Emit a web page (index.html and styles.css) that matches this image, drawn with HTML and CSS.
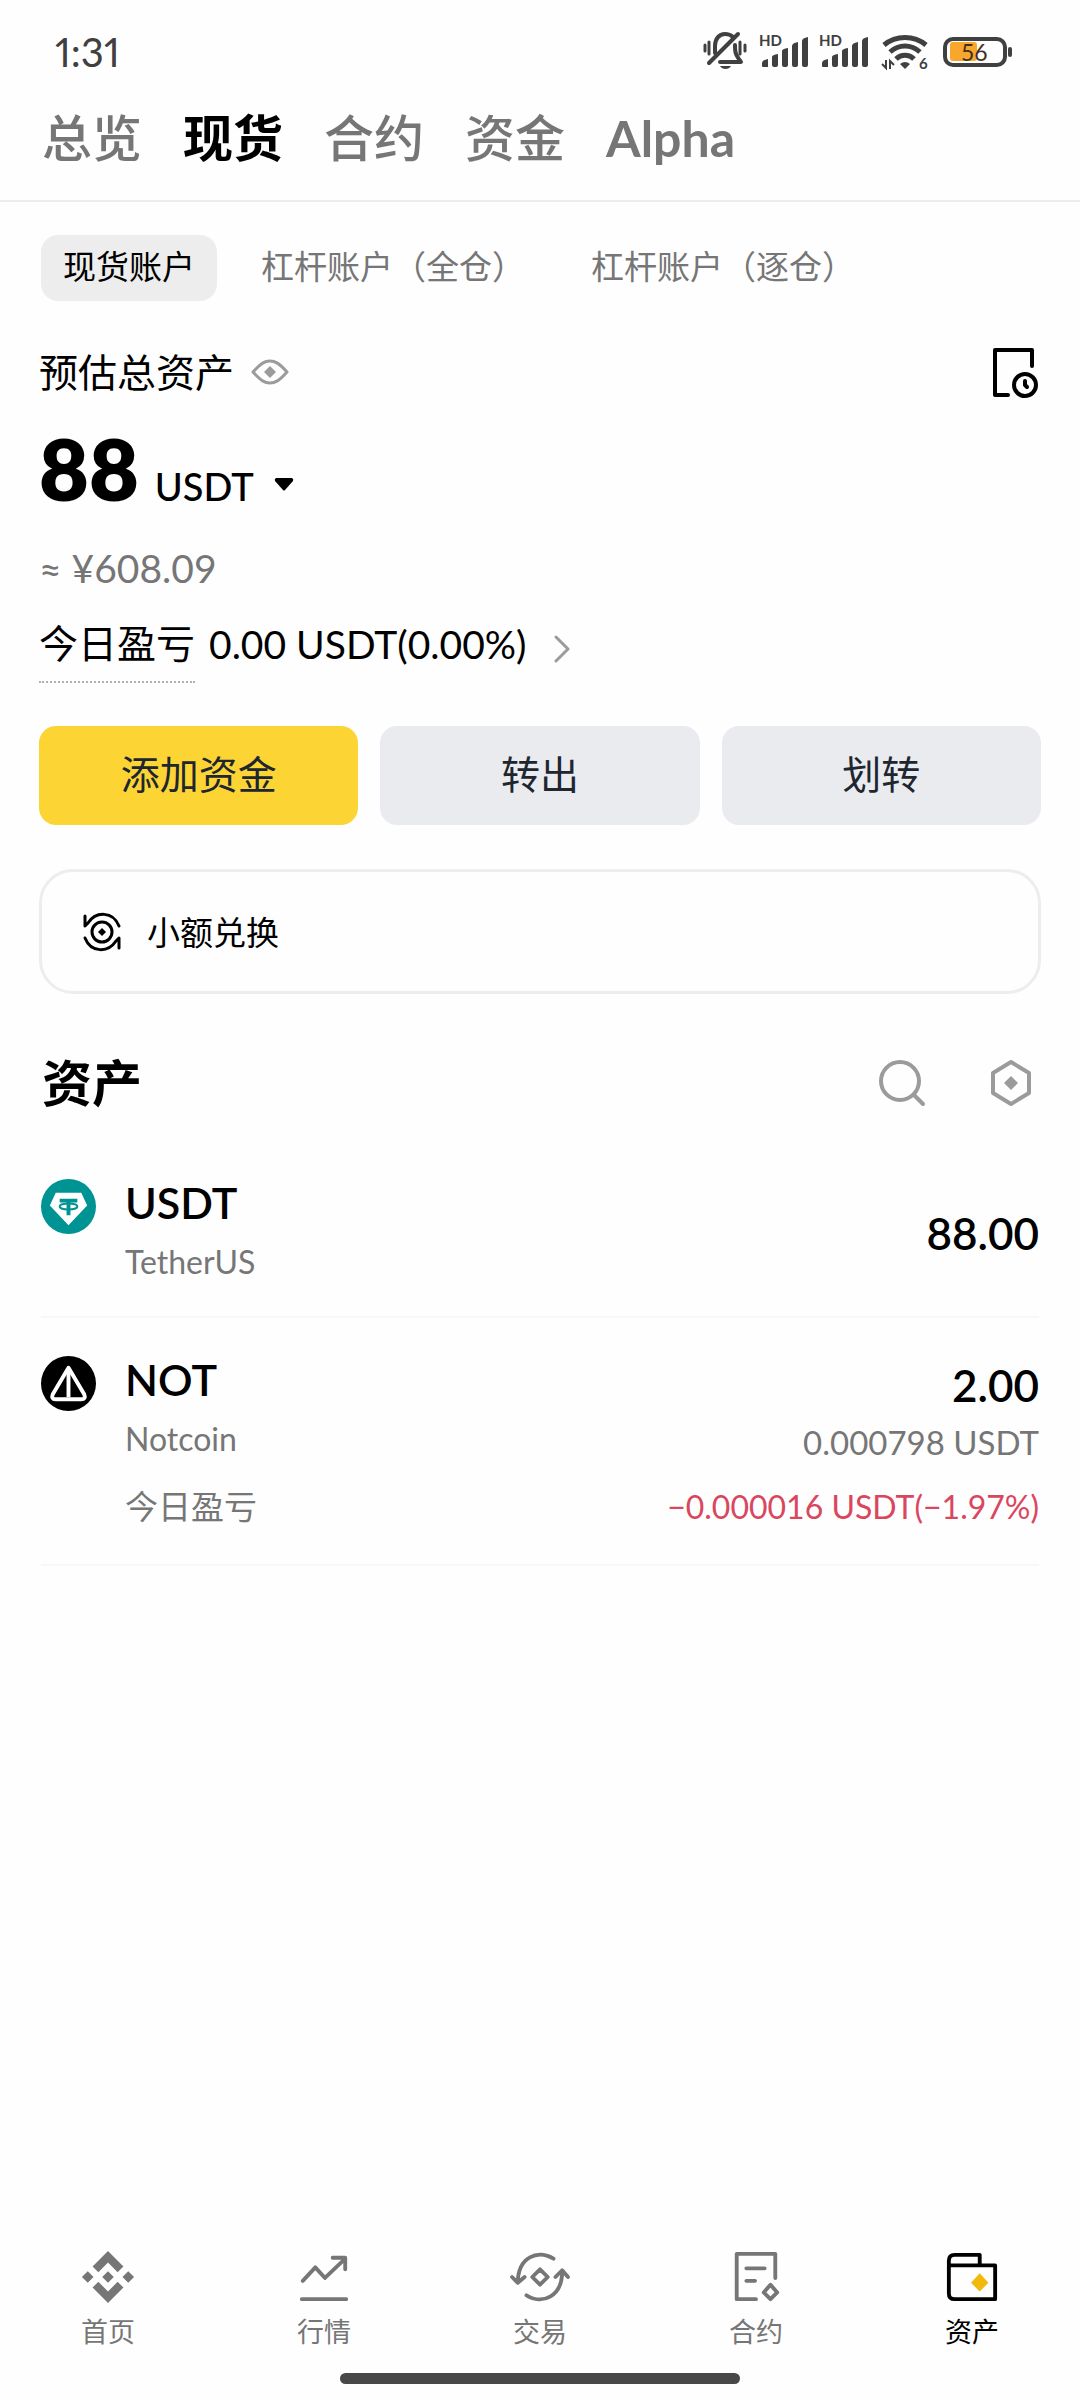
FILE: index.html
```html
<!DOCTYPE html>
<html lang="zh-CN">
<head>
<meta charset="utf-8">
<meta name="viewport" content="width=device-width, initial-scale=1">
<title>资产</title>
<link rel="stylesheet" href="styles.css">
</head>
<body>
<div class="app">
  <div class="status">
    <time class="status-time">1:31</time>
    <div class="status-icons">
      <svg width="48" height="42" viewBox="0 0 48 42" fill="none" stroke="currentColor" stroke-width="4" stroke-linecap="round" stroke-linejoin="round">
        <path d="M2 14v6M6 11v12M37 11v12M42 14v6" stroke-width="3"/>
        <path d="M12 22v-7c0-7 4-12 10-12 3 0 6 1 8 3M32 14c0 7 0 9 6 17H17"/>
        <path d="M35 3 6 32"/>
        <path d="M17 35h11c-2 4-9 4-11 0z" fill="currentColor" stroke="none"/>
      </svg>
      <svg width="52" height="44" viewBox="0 -4 52 44" fill="currentColor">
        <text x="0" y="12" class="glyph-hd">HD</text>
        <path d="M3 29q0-3 6-4v8H4q-1 0-1-1zM13 23q0-2 6-3v11q0 2-2 2h-2q-2 0-2-2zM23 17q0-2 6-3v17q0 2-2 2h-2q-2 0-2-2zM33 12q0-3 6-4v23q0 2-2 2h-2q-2 0-2-2zM43 7q0-3 6-4v28q0 2-2 2h-2q-2 0-2-2z"/>
      </svg>
      <svg width="54" height="44" viewBox="0 -4 54 44" fill="currentColor">
        <text x="0" y="12" class="glyph-hd">HD</text>
        <path d="M3 29q0-3 6-4v8H4q-1 0-1-1zM13 23q0-2 6-3v11q0 2-2 2h-2q-2 0-2-2zM23 17q0-2 6-3v17q0 2-2 2h-2q-2 0-2-2zM33 12q0-3 6-4v23q0 2-2 2h-2q-2 0-2-2zM43 7q0-3 6-4v28q0 2-2 2h-2q-2 0-2-2z"/>
      </svg>
      <svg width="54" height="44" viewBox="0 -4 54 44" fill="none" stroke="currentColor">
        <path d="M3 11C15 1 33 1 45 11M9 18c9-8 21-8 30 0M15 25c5-5 13-5 18 0" stroke-width="5"/>
        <path d="M19 30q5-4 10 0l-5 5z" fill="currentColor" stroke="none"/>
        <path d="M5 26v8l-4-4M9 35v-8l4 4" stroke-width="2"/>
        <text x="38" y="35" class="glyph-six">6</text>
      </svg>
      <svg width="70" height="32" viewBox="0 0 70 32">
        <rect x="7" y="6" width="27" height="19" rx="3" fill="#f9a72c"/>
        <rect x="2" y="3" width="60" height="26" rx="8" fill="none" stroke="currentColor" stroke-width="4"/>
        <rect x="65" y="11" width="4" height="10" rx="2" fill="currentColor"/>
        <text x="18" y="25" class="glyph-charge">56</text>
      </svg>
    </div>
  </div>

  <nav class="tabs">
    <a href="#overview">总览</a>
    <a href="#spot" class="is-active" aria-current="page">现货</a>
    <a href="#futures">合约</a>
    <a href="#funding">资金</a>
    <a href="#alpha" class="tab-latin">Alpha</a>
  </nav>

  <main class="content">
    <div class="accounts">
      <button type="button" class="pill is-selected">现货账户</button>
      <button type="button" class="pill">杠杆账户（全仓）</button>
      <button type="button" class="pill">杠杆账户（逐仓）</button>
    </div>

    <section class="summary">
      <div class="summary-head">
        <h2 class="summary-title">预估总资产</h2>
        <button type="button" class="icon-button" aria-label="隐藏余额">
          <svg width="38" height="28" viewBox="0 0 38 28" fill="none" stroke="#9b9b9b" stroke-width="3" stroke-linejoin="round">
            <path d="M2 14C10 5 14 3 19 3s9 2 17 11c-8 9-12 11-17 11S10 23 2 14z"/>
            <path d="M19 8l6 6-6 6-6-6z" fill="#9b9b9b" stroke="none"/>
          </svg>
        </button>
        <button type="button" class="icon-button history" aria-label="历史记录">
          <svg width="48" height="52" viewBox="0 0 48 52" fill="none" stroke="#000" stroke-width="4" stroke-linecap="round" stroke-linejoin="round">
            <path d="M39 18V2H2v45h13"/>
            <circle cx="32" cy="37" r="11"/>
            <path d="M32 33v4l2 2"/>
          </svg>
        </button>
      </div>
      <div class="balance">
        <strong class="balance-value">88</strong>
        <select class="currency" aria-label="计价单位"><option>USDT</option></select>
        <svg class="caret" width="20" height="14" viewBox="0 0 20 14"><path d="M2 0h16q2 1 1 3l-8 9q-1 1-2 0L1 3Q0 1 2 0z"/></svg>
      </div>
      <p class="fiat">≈ ¥608.09</p>
      <a href="#pnl" class="pnl">
        <span class="pnl-label">今日盈亏</span>
        <span class="pnl-value">0.00 USDT(0.00%)</span>
        <svg width="16" height="28" viewBox="0 0 16 28" fill="none" stroke="#9b9b9b" stroke-width="3" stroke-linecap="round" stroke-linejoin="round"><path d="M2 2l12 12L2 26"/></svg>
      </a>
    </section>

    <div class="actions">
      <button type="button" class="action is-primary">添加资金</button>
      <button type="button" class="action">转出</button>
      <button type="button" class="action">划转</button>
    </div>

    <a href="#convert" class="convert">
      <svg width="38" height="40" viewBox="0 0 38 40" fill="none" stroke="#000" stroke-width="3" stroke-linecap="round" stroke-linejoin="round">
        <path d="M2 4v10l3-3C13-1 30-1 36 14M36 36V26l-3 3C25 41 8 41 2 26"/>
        <circle cx="19" cy="20" r="10"/>
        <path d="M19 16l4 4-4 4-4-4z" fill="#000" stroke="none"/>
      </svg>
      小额兑换
    </a>

    <section>
      <div class="assets-head">
        <h2 class="assets-title">资产</h2>
        <button type="button" class="icon-button" aria-label="搜索">
          <svg width="48" height="48" viewBox="0 0 48 48" fill="none" stroke="#9b9b9b" stroke-width="4" stroke-linecap="round"><circle cx="21" cy="22" r="19"/><path d="M35 36l9 9"/></svg>
        </button>
        <button type="button" class="icon-button" aria-label="设置">
          <svg width="40" height="48" viewBox="0 0 40 48" fill="none" stroke="#9b9b9b" stroke-width="4" stroke-linejoin="round"><path d="M20 3l18 11v20L20 45 2 34V14z"/><path d="M20 17l7 7-7 7-7-7z" fill="#9b9b9b" stroke="none"/></svg>
        </button>
      </div>
      <ul class="assets">
        <li class="asset">
          <svg class="coin" width="55" height="55" viewBox="0 0 56 56">
            <circle cx="28" cy="28" r="28" fill="#009393"/>
            <path d="M15 14h26l6 13-19 20L9 27z" fill="#fff"/>
            <path d="M19 20h18v4h-7v13h-4V24h-7z" fill="#009393"/>
            <ellipse cx="28" cy="28" rx="9" ry="3" fill="none" stroke="#009393" stroke-width="2"/>
          </svg>
          <div class="asset-info">
            <h3 class="asset-symbol">USDT</h3>
            <p class="asset-sub">TetherUS</p>
          </div>
          <div class="asset-figures is-single"><p class="asset-amount">88.00</p></div>
        </li>
        <li class="asset">
          <svg class="coin" width="55" height="55" viewBox="0 0 56 56">
            <circle cx="28" cy="28" r="28" fill="#000"/>
            <path d="M28 12L12 39q-2 5 3 5h26q5 0 3-5L28 12z" fill="none" stroke="#fff" stroke-width="4" stroke-linejoin="round"/>
            <path d="M28 14v28" stroke="#fff" stroke-width="4"/>
          </svg>
          <div class="asset-info">
            <h3 class="asset-symbol">NOT</h3>
            <p class="asset-sub">Notcoin</p>
            <p class="asset-note">今日盈亏</p>
          </div>
          <div class="asset-figures">
            <p class="asset-amount">2.00</p>
            <p class="asset-sub">0.000798 USDT</p>
            <p class="asset-note is-loss">−0.000016 USDT(−1.97%)</p>
          </div>
        </li>
      </ul>
    </section>
  </main>

  <nav class="dock">
    <a href="#home">
      <svg width="54" height="54" viewBox="0 0 56 56" fill="currentColor"><path d="M28 1l16 16-6 6-10-10-10 10-6-6zM28 55l16-16-6-6-10 10-10-10-6 6zM28 22l6 6-6 6-6-6zM7 22l6 6-6 6-6-6zM49 22l6 6-6 6-6-6z"/></svg>
      首页
    </a>
    <a href="#markets">
      <svg width="54" height="54" viewBox="0 0 56 56" fill="none" stroke="currentColor" stroke-width="4" stroke-linecap="round" stroke-linejoin="round"><path d="M6 32l13-14 10 11L50 9M37 8h13v12M5 51h46"/></svg>
      行情
    </a>
    <a href="#trade">
      <svg width="62" height="54" viewBox="0 0 64 56" fill="none" stroke="currentColor" stroke-width="4" stroke-linecap="round" stroke-linejoin="round"><path d="M46 9C30-1 9 7 9 34M3 28l6 6 7-6M18 47c16 10 37 2 37-25M48 28l7-7 6 7M32 20l8 8-8 8-8-8z"/></svg>
      交易
    </a>
    <a href="#contract">
      <svg width="54" height="54" viewBox="0 0 56 56" fill="none" stroke="currentColor" stroke-width="4" stroke-linecap="round" stroke-linejoin="round"><path d="M48 29V4H8v47h20M18 19h19M18 32h9"/><path d="M43 36l7 8-7 7-7-7z"/></svg>
      合约
    </a>
    <a href="#assets" class="is-active" aria-current="page">
      <svg width="54" height="54" viewBox="0 0 56 56" fill="none" stroke="currentColor" stroke-width="4" stroke-linecap="round" stroke-linejoin="round"><path d="M4 16v29q0 6 6 6h42V16zM4 16v-5q0-6 6-6h26v11"/><path d="M36 24l9 10-9 9-9-9z" fill="#f0b90b" stroke="none"/></svg>
      资产
    </a>
  </nav>
  <div class="home-bar"></div>
</div>
</body>
</html>
```
FILE: styles.css
```css
* { box-sizing: border-box; }

body {
  margin: 0;
  background: #fefefe;
  color: #000;
  font-family: Lato, "Noto Sans CJK SC", sans-serif;
}

h2, h3, p, ul { margin: 0; padding: 0; font-weight: 400; }
ul { list-style: none; }
a { color: inherit; text-decoration: none; }
svg { display: block; flex: none; }
button, select {
  margin: 0;
  padding: 0;
  border: 0;
  background: none;
  color: inherit;
  font: inherit;
}

.app { min-height: 100vh; display: flex; flex-direction: column; }

.status {
  height: 104px;
  padding: 0 67px 0 55px;
  display: flex;
  align-items: center;
  justify-content: space-between;
  color: #404040;
}
.status-time { font-size: 40px; line-height: 48px; font-variant-numeric: proportional-nums; }
.status-icons { display: flex; align-items: center; gap: 8px; }
.glyph-hd { font-size: 15px; font-weight: 700; }
.glyph-six { font-size: 15px; font-weight: 700; fill: currentColor; stroke: none; }
.glyph-charge { font-size: 23px; fill: #403020; }

.tabs {
  display: flex;
  gap: 41px;
  padding: 0 42px 28px;
  border-bottom: 2px solid #ededed;
  color: #767676;
  font-size: 50px;
  line-height: 68px;
  font-weight: 500;
}
.tabs .is-active { color: #000; font-weight: 700; }
.tabs .tab-latin { font-weight: 700; }

.content { flex: 1; padding: 33px 39px 0; }

.accounts { display: flex; gap: 22px; padding-left: 2px; }
.pill {
  height: 66px;
  padding: 0 22px 5px;
  border-radius: 17px;
  color: #767676;
  font-size: 33px;
  line-height: 48px;
  white-space: nowrap;
}
.pill.is-selected { background: #ededed; color: #000; }

.summary-head {
  display: flex;
  align-items: flex-start;
  padding-top: 45px;
}
.summary-title { font-size: 39px; line-height: 52px; }
.icon-button { display: flex; align-items: center; height: 52px; }
.summary-head .icon-button { margin-left: 17px; }
.summary-head .history { margin: 2px 0 0 auto; }

.balance {
  display: flex;
  align-items: baseline;
  line-height: 80px;
  margin-top: 28px;
}
.balance-value { font-size: 86px; font-weight: 800; }
.currency { appearance: none; margin-left: 16px; font-size: 38px; line-height: 48px; font-weight: 500; }
.caret { margin: 32px 0 0 20px; align-self: center; }
.fiat { margin-top: 30px; color: #767676; font-size: 39px; line-height: 56px; }
.pnl { display: flex; align-items: center; margin-top: 9px; font-size: 39px; }
.pnl-label { line-height: 76px; border-bottom: 2px dotted #b0b0b0; }
.pnl-value { margin-left: 14px; }
.pnl svg { margin: 10px 0 0 28px; }

.actions {
  display: grid;
  grid-template-columns: repeat(3, 1fr);
  gap: 22px;
  margin-top: 43px;
}
.action {
  height: 99px;
  padding-bottom: 7px;
  border-radius: 17px;
  background: #eaebef;
  color: #202630;
  font-size: 39px;
}
.action.is-primary { background: #fcd535; }

.convert {
  display: flex;
  align-items: center;
  gap: 26px;
  height: 125px;
  margin-top: 44px;
  padding: 0 41px;
  border: 3px solid #ededed;
  border-radius: 34px;
  font-size: 33px;
  line-height: 48px;
}

.assets-head {
  display: flex;
  align-items: center;
  gap: 64px;
  margin-top: 51px;
  padding: 0 10px 0 3px;
}
.assets-title { flex: 1; font-size: 50px; line-height: 76px; font-weight: 700; }

.assets { padding: 0 2px; margin-top: 38px; }
.asset {
  display: flex;
  padding: 20px 0 30px;
  border-bottom: 2px solid #f8f8f8;
}
.asset + .asset { padding-top: 38px; }
.coin { margin-right: 29px; }
.asset-info { flex: 1; }
.asset-symbol, .asset-amount { font-size: 43px; line-height: 48px; font-weight: 600; }
.asset-amount { font-size: 44px; }
.asset-sub { margin-top: 11px; color: #767676; font-size: 32px; line-height: 48px; }
.asset-note { margin-top: 16px; color: #767676; font-size: 33px; line-height: 54px; }
.asset-figures { padding-top: 5px; text-align: right; }
.asset-figures.is-single { padding-top: 0; align-self: center; }
.asset-figures .asset-sub { margin-top: 9px; font-size: 33px; }
.asset-figures .asset-note { margin-top: 14px; font-size: 32px; }
.asset-note.is-loss { color: #d9475e; }

.dock { display: grid; grid-template-columns: repeat(5, 1fr); }
.dock a {
  display: flex;
  flex-direction: column;
  align-items: center;
  gap: 8px;
  color: #767676;
  font-size: 27px;
  line-height: 40px;
}
.dock .is-active { color: #000; }

.home-bar {
  width: 37%;
  height: 11px;
  margin: 21px auto 16px;
  border-radius: 6px;
  background: #484848;
}
```
